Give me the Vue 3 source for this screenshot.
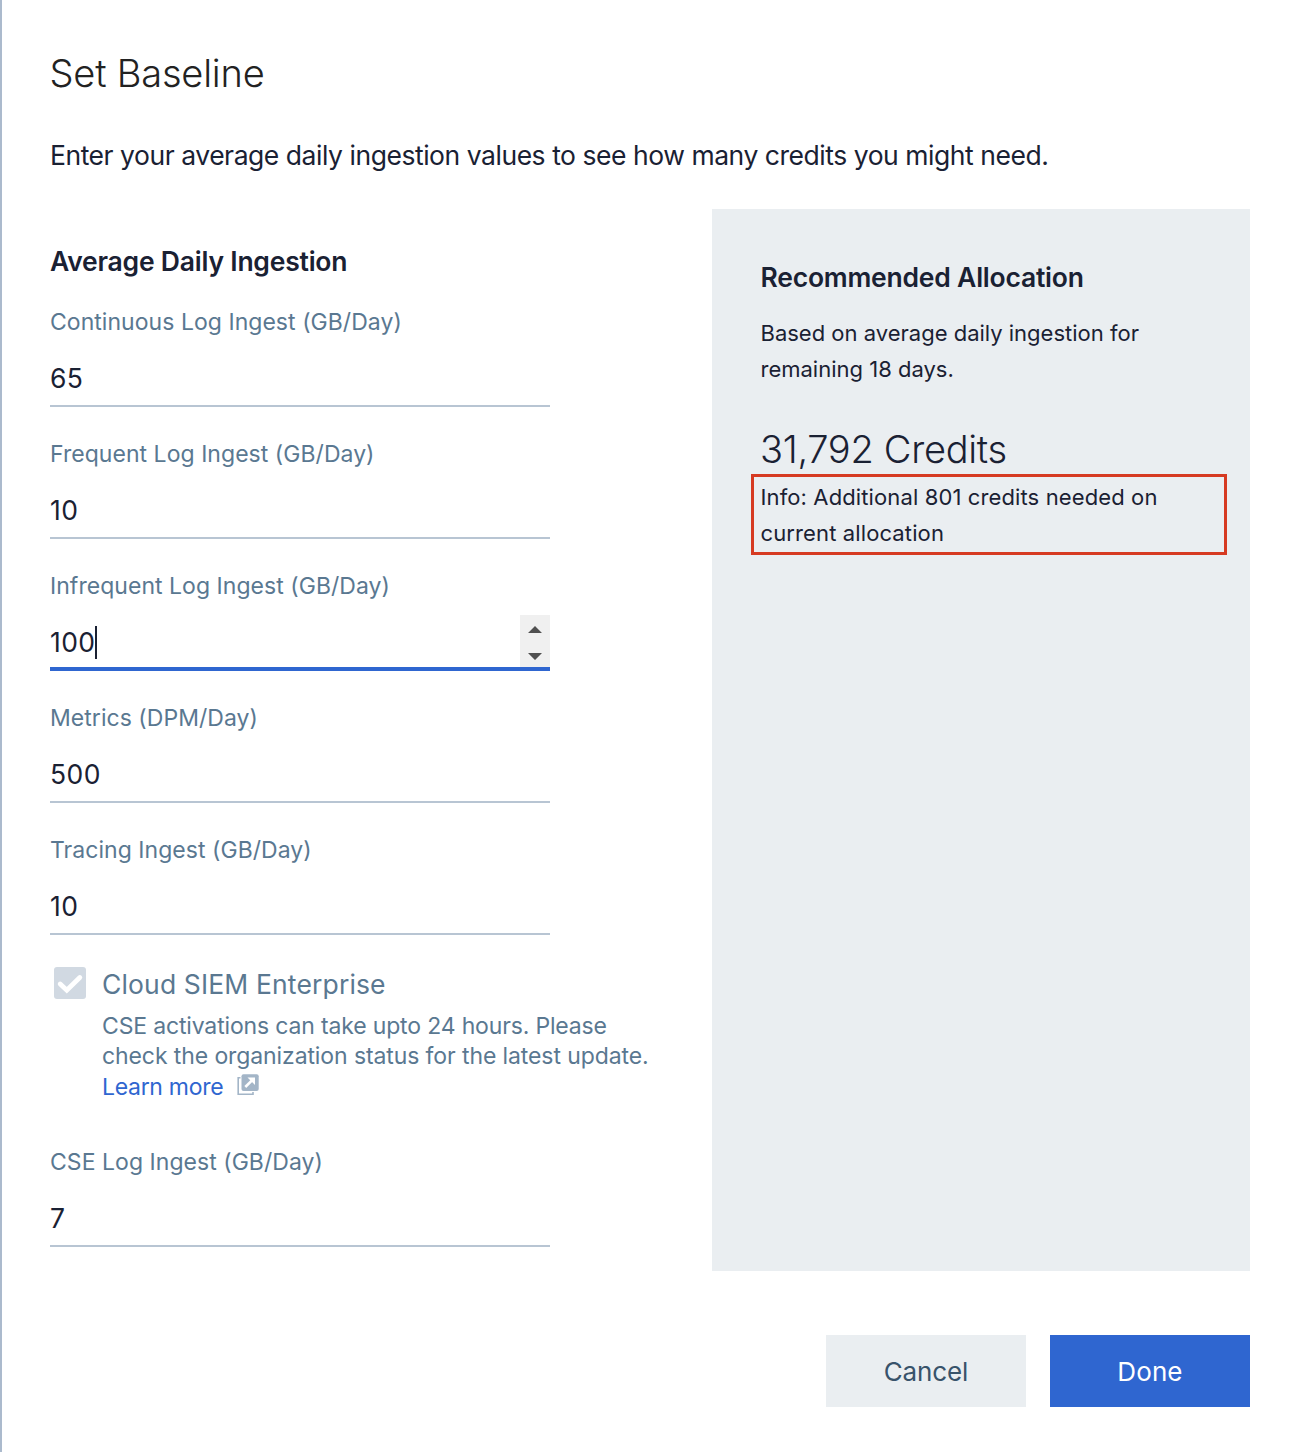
<script setup>
const fields = [
  { label: 'Continuous Log Ingest (GB/Day)', value: '65' },
  { label: 'Frequent Log Ingest (GB/Day)', value: '10' },
  { label: 'Infrequent Log Ingest (GB/Day)', value: '100', focused: true },
  { label: 'Metrics (DPM/Day)', value: '500' },
  { label: 'Tracing Ingest (GB/Day)', value: '10' },
]
</script>

<template>
  <main class="dialog">
    <h1>Set Baseline</h1>
    <p class="intro">Enter your average daily ingestion values to see how many credits you might need.</p>

    <div class="body">
      <section class="form">
        <h2>Average Daily Ingestion</h2>
        <div v-for="f in fields" :key="f.label" class="field">
          <div class="label">{{ f.label }}</div>
          <div class="input" :class="{ focused: f.focused }">
            <span class="value">{{ f.value }}</span>
            <span v-if="f.focused" class="caret"></span>
            <svg v-if="f.focused" class="spinner" width="30" height="52" viewBox="0 0 30 52">
              <rect width="30" height="52" fill="#f0f0f0" />
              <path d="M8 18L15 11L22 18ZM8 38H22L15 45Z" fill="#505050" />
            </svg>
          </div>
        </div>

        <div class="siem">
          <svg class="check" width="32" height="32" viewBox="0 0 32 32">
            <rect width="32" height="32" rx="3" fill="#d1d9e2" />
            <path d="M6.200 17L12.800 23.200L25.800 10.500" fill="none" stroke="#fff" stroke-width="4.800" stroke-linecap="round" />
          </svg>
          <div>
            <div class="siem-title">Cloud SIEM Enterprise</div>
            <div class="siem-text">
              CSE activations can take upto 24 hours. Please<br />
              <span class="wide">check the organization status for the latest update.</span><br />
              <a>Learn more</a>
              <svg class="ext" width="22" height="22" viewBox="0 0 22 22">
                <path d="M3.500 3.800H1.200V20.300H16V18" fill="none" stroke="#a3b5c7" stroke-width="1.600" />
                <rect x="4.500" y="0.300" width="17.200" height="16.700" rx="2" fill="#a3b5c7" />
                <path d="M8.300 13L15.500 5.800" fill="none" stroke="#fff" stroke-width="2.600" />
                <path d="M10.500 3.600H18V11Z" fill="#fff" />
              </svg>
            </div>
          </div>
        </div>

        <div class="field last">
          <div class="label">CSE Log Ingest (GB/Day)</div>
          <div class="input"><span class="value">7</span></div>
        </div>
      </section>

      <aside class="panel">
        <h2>Recommended Allocation</h2>
        <p class="basis">Based on average daily ingestion for<br />remaining 18 days.</p>
        <div class="credits">31,792 Credits</div>
        <div class="info">Info: Additional 801 credits needed on<br />current allocation</div>
      </aside>
    </div>

    <footer>
      <button class="cancel">Cancel</button>
      <button class="done">Done</button>
    </footer>
  </main>
</template>

<style>
body { margin: 0; background: #fff; }
</style>

<style scoped>
.dialog {
  box-sizing: border-box;
  width: 1296px;
  height: 1452px;
  padding: 49px 46px 0 48px;
  border-left: 2px solid #abbacd;
  background: #fff;
  color: #1a2133;
  font-family: Inter, "Liberation Sans", sans-serif;
}
h1, h2, p { margin: 0; }
h1 {
  color: #222;
  font-size: 38px;
  font-weight: 300;
  line-height: 48px;
  letter-spacing: -0.2px;
  text-indent: -0.5px;
}
.intro {
  margin-top: 40px;
  font-size: 26.5px;
  line-height: 36px;
  letter-spacing: -0.46px;
  white-space: nowrap;
}
.body {
  display: flex;
  justify-content: space-between;
  margin-top: 36px;
}
.form { width: 620px; padding: 34px 0 24px; }
h2 {
  font-size: 26.5px;
  font-weight: 600;
  line-height: 36px;
  letter-spacing: -0.22px;
  white-space: nowrap;
}
.field { width: 500px; margin-bottom: 32px; }
h2 + .field { margin-top: 28px; }
.field.last { margin-bottom: 0; }
.label {
  margin-bottom: 14px;
  color: #5a7891;
  font-size: 23px;
  line-height: 30px;
  letter-spacing: 0.04px;
}
.input {
  display: flex;
  align-items: flex-start;
  box-sizing: border-box;
  height: 56px;
  border-bottom: 2px solid #b8c5d3;
  font-size: 26.5px;
  line-height: 55px;
  letter-spacing: 0.4px;
}
.input.focused { border-bottom: 4px solid #2f66d0; }
.caret { width: 2px; height: 33px; margin-top: 11px; background: #1a2133; }
.spinner { margin-left: auto; }
.siem {
  display: flex;
  gap: 16px;
  padding-left: 4px;
  margin-bottom: 45px;
}
.check { flex: none; }
.siem-title {
  margin-top: -1px;
  color: #5a7891;
  font-size: 26.5px;
  line-height: 36px;
  letter-spacing: 0.14px;
}
.siem-text {
  height: 91px;
  margin-top: 9px;
  color: #5a7891;
  font-size: 23px;
  line-height: 30.4px;
  letter-spacing: -0.16px;
  white-space: nowrap;
}
.siem-text .wide { letter-spacing: -0.1px; }
.siem-text a { color: #2f66d0; letter-spacing: -0.3px; }
.ext { margin: 0 0 -1px 7px; position: relative; left: 7px; }
.panel {
  box-sizing: border-box;
  width: 538px;
  padding: 50px 23px 0 48.5px;
  background: #eaeef1;
}
.basis, .info {
  font-size: 22px;
  line-height: 36px;
  white-space: nowrap;
}
.basis { margin-top: 20px; }
.credits {
  margin-top: 38px;
  font-size: 38px;
  font-weight: 300;
  line-height: 48px;
  letter-spacing: -0.3px;
  text-indent: -0.5px;
}
.info {
  box-sizing: border-box;
  height: 81px;
  margin: 1px 0 0 -10px;
  padding: 2px 7px;
  border: 3px solid #d63a22;
  letter-spacing: 0.12px;
}
footer {
  display: flex;
  justify-content: flex-end;
  gap: 24px;
  margin-top: 64px;
}
button {
  width: 200px;
  height: 72px;
  padding: 1px 0 0;
  border: 0;
  font: 400 26px/71px Inter, "Liberation Sans", sans-serif;
  letter-spacing: -0.1px;
}
.cancel { background: #eaeef1; color: #38536b; }
.done { background: #2f66d0; color: #fff; letter-spacing: 0.1px; }
</style>
